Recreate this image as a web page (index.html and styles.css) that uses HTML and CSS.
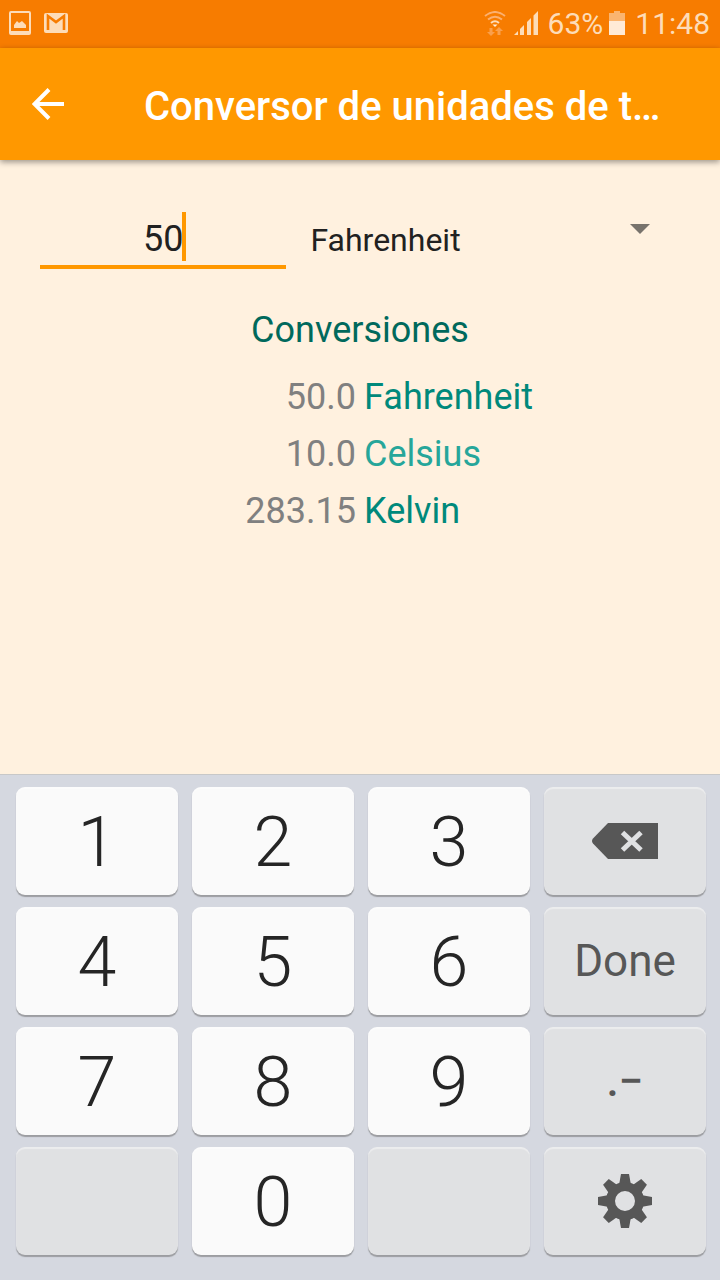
FILE: index.html
```html
<!DOCTYPE html>
<html lang="es">
<head>
<meta charset="utf-8">
<meta name="viewport" content="width=device-width, initial-scale=1">
<title>Conversor de unidades de temperatura</title>
<link rel="stylesheet" href="styles.css">
</head>
<body>
<div class="status-bar">
  <div class="status-group status-left">
    <svg width="22" height="24" viewBox="0 0 22 24" aria-hidden="true"><path fill="#fddcb8" fill-rule="evenodd" d="M2 0h18a2 2 0 0 1 2 2v20a2 2 0 0 1-2 2H2a2 2 0 0 1-2-2V2a2 2 0 0 1 2-2zM2 2v18h18V2zM5 17v-3l3-4 2 2 3-2 4 4v3z"/></svg>
    <svg width="24" height="20" viewBox="0 0 24 20" aria-hidden="true"><rect width="24" height="20" rx="2" fill="#fddcb8"/><path d="M4 17V3L12 9L20 3V17" fill="none" stroke="#f77c00" stroke-width="2.6"/></svg>
  </div>
  <div class="status-group status-right">
    <svg width="22" height="25" viewBox="0 0 22 25" aria-hidden="true"><g fill="none" stroke="#fbb070" stroke-width="2"><path d="M1 5Q11-3 21 5"/><path d="M4 8.500Q11 3 18 8.500"/><path stroke="#fddcb8" d="M7 12Q11 8.500 15 12"/></g><path fill="#ffeeda" d="M8.500 13.500h5L11 16z"/><path fill="#fa9f4c" d="M5.500 17h3v4H11l-4 4-4-4h2.500zM13.500 24v-4H11l4-4 4 4h-2.500v4z"/></svg>
    <svg width="24" height="24" viewBox="0 0 24 24" aria-hidden="true"><path fill="#fddcb8" d="M0 24l4-4v4zM6 24v-6l4-4v10zM13 24V11l4-4v17zM19.500 24V4.500L24 0v24z"/></svg>
    <span class="battery-level">63%</span>
    <svg width="16" height="24" viewBox="0 0 16 24" aria-hidden="true"><path fill="#fab46f" d="M5 0h6v2h5v8H0V2h5z"/><path fill="#ffead6" d="M0 10h16v14H0z"/></svg>
    <span class="clock">11:48</span>
  </div>
</div>
<header class="app-bar">
  <button class="back" type="button" aria-label="Atrás">
    <svg width="32" height="32" viewBox="0 0 32 32" aria-hidden="true"><path d="M32 16H3M17 1.500L2.500 16L17 30.500" fill="none" stroke="#fff" stroke-width="4"/></svg>
  </button>
  <h1 class="title">Conversor de unidades de temperatura</h1>
</header>
<main class="content">
  <form class="entry">
    <div class="field">
      <input class="amount" type="text" inputmode="decimal" value="50" aria-label="Valor">
      <span class="caret"></span>
    </div>
    <div class="field">
      <select class="unit" aria-label="Unidad">
        <option>Fahrenheit</option>
        <option>Celsius</option>
        <option>Kelvin</option>
      </select>
      <svg class="arrow" width="20" height="10" viewBox="0 0 20 10" aria-hidden="true"><path d="M0 0h20L10 10z" fill="#78736c"/></svg>
    </div>
  </form>
  <h2 class="heading">Conversiones</h2>
  <table class="results">
    <tr><td>50.0</td><th scope="row">Fahrenheit</th></tr>
    <tr><td>10.0</td><th scope="row" class="light">Celsius</th></tr>
    <tr><td>283.15</td><th scope="row">Kelvin</th></tr>
  </table>
</main>
<section class="keyboard" aria-label="Teclado">
  <button class="key digit" type="button">1</button>
  <button class="key digit" type="button">2</button>
  <button class="key digit" type="button">3</button>
  <button class="key action" type="button" aria-label="Borrar">
    <svg width="66" height="36" viewBox="0 0 66 36" aria-hidden="true"><path fill="#575757" d="M16 0H66V36H16L1 20.500Q-1 18 1 15.500z"/><path d="M30.500 9.500L49 27M49 9.500L30.500 27" stroke="#e0e1e3" stroke-width="5"/></svg>
  </button>
  <button class="key digit" type="button">4</button>
  <button class="key digit" type="button">5</button>
  <button class="key digit" type="button">6</button>
  <button class="key action" type="button">Done</button>
  <button class="key digit" type="button">7</button>
  <button class="key digit" type="button">8</button>
  <button class="key digit" type="button">9</button>
  <button class="key action symbols" type="button">.−</button>
  <button class="key action" type="button" aria-label="Vacía" disabled></button>
  <button class="key digit" type="button">0</button>
  <button class="key action" type="button" aria-label="Vacía" disabled></button>
  <button class="key action" type="button" aria-label="Ajustes">
    <svg width="54" height="54" viewBox="-27 -27 54 54" aria-hidden="true">
      <defs><path id="tooth" d="M-4-27H4L6-16H-6z"/></defs>
      <g fill="#575757">
        <use href="#tooth"/><use href="#tooth" transform="rotate(45)"/><use href="#tooth" transform="rotate(90)"/><use href="#tooth" transform="rotate(135)"/><use href="#tooth" transform="rotate(180)"/><use href="#tooth" transform="rotate(225)"/><use href="#tooth" transform="rotate(270)"/><use href="#tooth" transform="rotate(315)"/>
      </g>
      <circle r="14.500" fill="none" stroke="#575757" stroke-width="9"/>
    </svg>
  </button>
</section>
</body>
</html>
```

FILE: styles.css
```css
* { box-sizing: border-box; }

body {
  margin: 0;
  min-height: 100vh;
  display: flex;
  flex-direction: column;
  background: #fff1df;
  font-family: Roboto, "Liberation Sans", sans-serif;
}

svg { display: block; flex: none; }

button, input, select { font-family: inherit; }

.status-bar {
  display: flex;
  justify-content: space-between;
  align-items: center;
  height: 48px;
  padding: 0 10px 2px 9px;
  background: #f77c00;
  color: #fddcb8;
  font-size: 30px;
  line-height: 46px;
}

.status-group { display: flex; align-items: center; }
.status-left { gap: 13px; }
.status-right { gap: 8px; }
.battery-level { padding: 2px 0 0 2px; margin-right: -2px; }
.clock { padding: 2px 0 0 2px; }

.app-bar {
  position: relative;
  display: flex;
  align-items: center;
  gap: 80px;
  min-height: 112px;
  padding: 0 56px 0 32px;
  background: #ff9800;
  box-shadow: 0 2px 6px rgba(0, 0, 0, 0.4);
}

.back { padding: 0; border: 0; background: none; }

.title {
  flex: 1;
  min-width: 0;
  margin: 0;
  padding-top: 6px;
  overflow: hidden;
  white-space: nowrap;
  text-overflow: ellipsis;
  color: #fff;
  font-size: 40px;
  font-weight: 500;
  line-height: 48px;
}

.content { flex: 1; padding: 52px 40px 40px; }

.entry {
  display: grid;
  grid-template-columns: 2fr 3fr;
  gap: 24px;
}

.field { position: relative; }

.amount {
  display: block;
  width: 100%;
  height: 57px;
  padding: 0;
  border: 0;
  border-bottom: 4px solid #ff9800;
  border-radius: 0;
  outline: 0;
  background: none;
  color: #212121;
  font-size: 36px;
  text-align: center;
}

.caret {
  position: absolute;
  top: 0;
  left: calc(50% + 19px);
  width: 4px;
  height: 49px;
  background: #ff9800;
}

.unit {
  display: block;
  width: 100%;
  height: 55px;
  padding: 0;
  border: 0;
  appearance: none;
  background: none;
  color: #212121;
  font-size: 32px;
}

.arrow {
  position: absolute;
  top: 12px;
  right: 30px;
  pointer-events: none;
}

.heading {
  margin: 40px 0 17px;
  color: #00695c;
  font-size: 36px;
  font-weight: 400;
  line-height: 43px;
  text-align: center;
}

.results {
  width: 100%;
  table-layout: fixed;
  border-collapse: collapse;
  font-size: 36px;
  line-height: 57px;
}

.results td { padding: 0 4px 0 0; color: #808080; text-align: right; }
.results th { padding: 0 0 0 4px; color: #00897b; font-weight: 400; text-align: left; }
.results .light { color: #26a69a; }

.keyboard {
  display: grid;
  grid-template-columns: repeat(4, 1fr);
  grid-auto-rows: 108px;
  gap: 12px 14px;
  padding: 12px 14px 25px 16px;
  border-top: 1px solid #c8c8c8;
  background: #d5d8e0;
}

.key {
  display: flex;
  align-items: center;
  justify-content: center;
  padding: 0;
  border: 0;
  border-radius: 9px;
  box-shadow: 0 2px 1px #9c9da1, inset 0 2px 1px rgba(255, 255, 255, 0.4);
}

.digit {
  padding-top: 2px;
  background: #fafafa;
  color: #252525;
  font-size: 70px;
  font-weight: 300;
}

.action {
  background: #e0e1e3;
  color: #575757;
  font-size: 44px;
  font-weight: 400;
}

.symbols { font-weight: 500; }
```
